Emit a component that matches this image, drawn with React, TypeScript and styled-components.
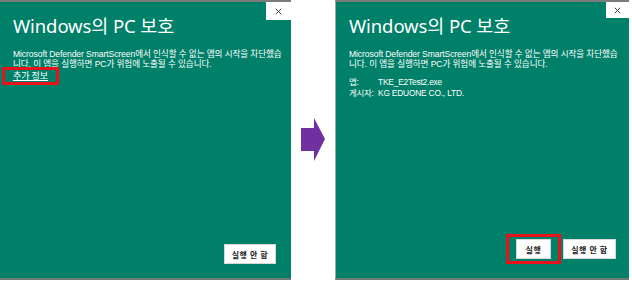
import styled, { createGlobalStyle } from "styled-components";

const GlobalStyle = createGlobalStyle`
  html, body {
    margin: 0;
    padding: 0;
    background: #ffffff;
  }
  body {
    font-family: "Liberation Sans", "Noto Sans CJK KR", sans-serif;
  }
`;

const Page = styled.div`
  width: 632px;
  height: 282px;
  display: flex;
  align-items: flex-start;
  background: #ffffff;
`;

const Panel = styled.div<{ $width: number; $padRight: number; $edge?: boolean }>`
  position: relative;
  box-sizing: border-box;
  width: ${(p) => p.$width}px;
  height: 280px;
  display: flex;
  flex-direction: column;
  padding: 12px ${(p) => p.$padRight}px 14px 13px;
  background: #007f69;
  border-top: 2px solid #7c7c7c;
  border-bottom: 2px solid #6f7a76;
  border-left: ${(p) => (p.$edge ? "1px solid #9aa9a4" : "none")};
  color: #ffffff;
`;

const CloseButton = styled.div<{ $w: number; $h: number }>`
  position: absolute;
  top: 0;
  right: 0;
  width: ${(p) => p.$w}px;
  height: ${(p) => p.$h}px;
  background: #ffffff;
  display: flex;
  align-items: center;
  justify-content: center;

  svg {
    width: 7px;
    height: 7px;
  }
`;

const Title = styled.h1`
  margin: 0;
  font-family: "Noto Sans", "Noto Sans CJK KR", sans-serif;
  font-size: 18.5px;
  font-weight: 400;
  line-height: 24px;
  letter-spacing: -0.1px;
  color: #ffffff;
`;

const Message = styled.p`
  margin: 11px 0 0;
  font-family: "Liberation Sans", "Noto Sans CJK KR", sans-serif;
  font-size: 8.6px;
  line-height: 10px;
  letter-spacing: -0.1px;
  color: #ffffff;
  white-space: nowrap;
`;

const Highlight = styled.div<{ $pad: string; $offset: number; $top: number }>`
  display: inline-flex;
  align-self: flex-start;
  margin-left: ${(p) => p.$offset}px;
  margin-top: ${(p) => p.$top}px;
  padding: ${(p) => p.$pad};
  border: 3px solid #e8121a;
`;

const MoreLink = styled.span`
  font-family: "Noto Sans CJK KR", sans-serif;
  font-size: 9px;
  line-height: 11px;
  color: #ffffff;
  text-decoration: underline;
  text-underline-offset: 1px;
`;

const Details = styled.div`
  margin-top: 8px;
  display: grid;
  grid-template-columns: 29px auto;
  font-family: "Liberation Sans", "Noto Sans CJK KR", sans-serif;
  font-size: 8.4px;
  line-height: 11px;
  letter-spacing: -0.2px;
`;

const Footer = styled.div`
  margin-top: auto;
  display: flex;
  justify-content: flex-end;
  align-items: center;
  gap: 2px;
`;

const Button = styled.button<{ $w: number }>`
  box-sizing: border-box;
  width: ${(p) => p.$w}px;
  height: 20px;
  padding: 0;
  border: 1px solid #d8d8d8;
  background: #ffffff;
  color: #222222;
  font-family: "Noto Sans CJK KR", sans-serif;
  font-size: 8px;
  font-weight: 700;
  letter-spacing: 0.6px;
`;

const ArrowSlot = styled.div`
  width: 44px;
  height: 280px;
  display: flex;
  align-items: center;
  justify-content: center;
  padding-left: 1px;
  box-sizing: border-box;
`;

function CloseIcon() {
  return (
    <svg viewBox="0 0 10 10">
      <path d="M1 1 L9 9 M9 1 L1 9" stroke="#333" strokeWidth="1.3" fill="none" />
    </svg>
  );
}

function Arrow() {
  return (
    <svg width="25" height="44" viewBox="0 0 25 44">
      <path d="M0 10 H13 V0 L24 21 L13 43 V33 H0 Z" fill="#7030a0" />
    </svg>
  );
}

export default function App() {
  return (
    <Page>
      <GlobalStyle />
      <Panel $width={291} $padRight={15}>
        <CloseButton $w={25} $h={18}>
          <CloseIcon />
        </CloseButton>
        <Title>Windows의 PC 보호</Title>
        <Message>
          Microsoft Defender SmartScreen에서 인식할 수 없는 앱의 시작을 차단했습
          <br />
          니다. 이 앱을 실행하면 PC가 위험에 노출될 수 있습니다.
        </Message>
        <Highlight $pad="0 8px 1px" $offset={-11} $top={-2}>
          <MoreLink>추가 정보</MoreLink>
        </Highlight>
        <Footer>
          <Button $w={52}>실행 안 함</Button>
        </Footer>
      </Panel>
      <ArrowSlot>
        <Arrow />
      </ArrowSlot>
      <Panel $width={294} $padRight={13} $edge>
        <CloseButton $w={23} $h={16}>
          <CloseIcon />
        </CloseButton>
        <Title>Windows의 PC 보호</Title>
        <Message>
          Microsoft Defender SmartScreen에서 인식할 수 없는 앱의 시작을 차단했습
          <br />
          니다. 이 앱을 실행하면 PC가 위험에 노출될 수 있습니다.
        </Message>
        <Details>
          <span>앱:</span>
          <span>TKE_E2Test2.exe</span>
          <span>게시자:</span>
          <span>KG EDUONE CO., LTD.</span>
        </Details>
        <Footer>
          <Highlight $pad="2px 7px" $offset={0} $top={0}>
            <Button $w={35}>실행</Button>
          </Highlight>
          <Button $w={53}>실행 안 함</Button>
        </Footer>
      </Panel>
    </Page>
  );
}
